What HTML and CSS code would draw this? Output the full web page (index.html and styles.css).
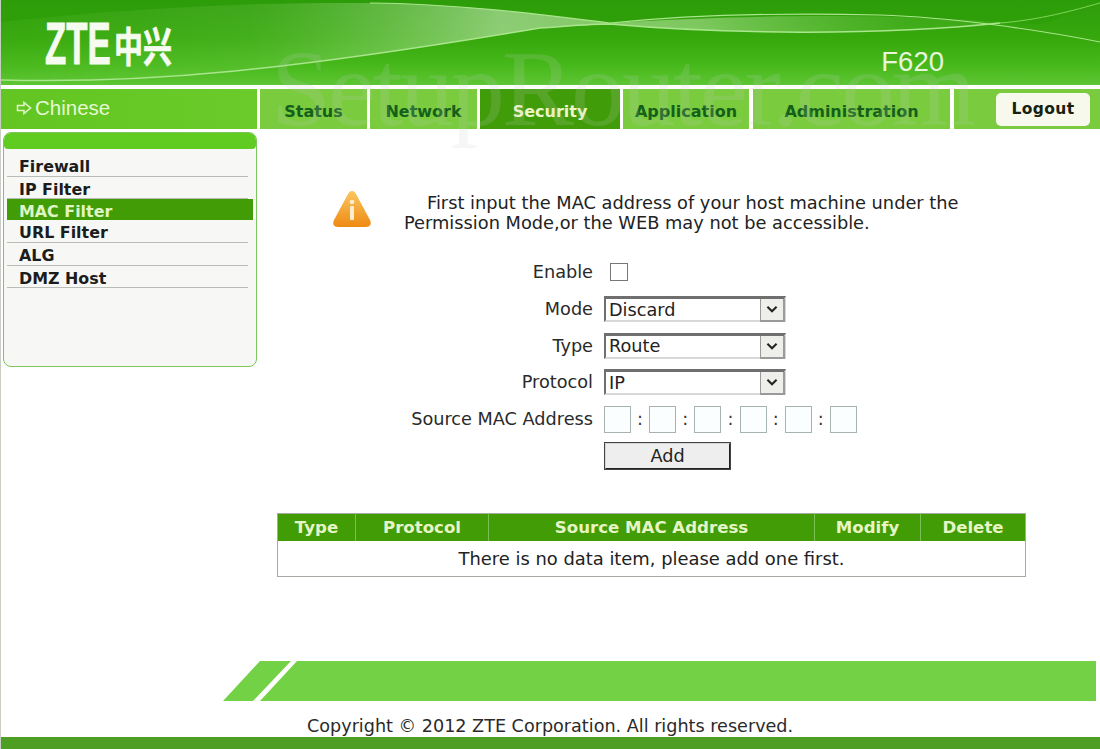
FILE: index.html
```html
<!DOCTYPE html>
<html lang="en">
<head>
<meta charset="utf-8">
<title>ZTE F620</title>
<link rel="stylesheet" href="styles.css">
</head>
<body>
<div class="page">
  <header class="header">
    <svg class="swoosh" viewBox="0 0 1100 85" preserveAspectRatio="none" aria-hidden="true">
      <defs>
        <linearGradient id="sheen" x1="0" x2="1" y1="0" y2="0">
          <stop offset="0" stop-color="#7fd45a" stop-opacity=".04"/>
          <stop offset=".25" stop-color="#8fd870" stop-opacity=".16"/>
          <stop offset=".5" stop-color="#cdeabf" stop-opacity=".58"/>
          <stop offset=".7" stop-color="#b9e5a2" stop-opacity=".55"/>
          <stop offset=".92" stop-color="#7fd45a" stop-opacity=".15"/>
        </linearGradient>
      </defs>
      <path d="M0 22C130 8 260 2 370 3C470 4 560 17 610 23C700 14 800 13 880 16C950 18 1000 22 1040 24C1060 18 1085 8 1100 3V0H0Z" fill="#2b9d08" opacity=".55"/>
      <path d="M0 80C150 84 290 70 540 28L610 24C720 34 880 36 1000 23C950 17 800 11 610 23C560 17 470 4 370 3C260 2 130 8 0 22Z" fill="url(#sheen)"/>
      <path d="M0 80C150 84 290 70 540 28C570 26 590 24 610 24C720 34 880 36 1000 23" fill="none" stroke="#a9e58c" stroke-width="1.5"/>
      <path d="M370 3C470 4 560 17 610 23C700 14 800 13 880 15C950 17 1040 30 1100 42" fill="none" stroke="#a9e58c" stroke-width="1.2"/>
      <path d="M1000 23C1040 20 1075 10 1100 3" fill="none" stroke="#7ed75a" stroke-width="1"/>
    </svg>
    <div class="logo"><span class="logo-latin">ZTE</span><span class="logo-cjk">中兴</span></div>
    <div class="model">F620</div>
  </header>

  <nav class="nav">
    <a class="lang"><svg class="lang-arrow" viewBox="0 0 16 14" aria-hidden="true"><path d="M1.5 4.5H8V1.5L14.5 7 8 12.5V9.5H1.5Z" fill="none" stroke="#dff6c4" stroke-width="1.6"/></svg>Chinese</a>
    <a class="tab tab-status">Status</a>
    <a class="tab tab-network">Network</a>
    <a class="tab tab-security">Security</a>
    <a class="tab tab-application">Application</a>
    <a class="tab tab-admin">Administration</a>
    <div class="tab-rest"><button class="logout" type="button">Logout</button></div>
  </nav>

  <div class="content">
    <aside class="sidebar">
      <div class="side-head"></div>
      <ul class="side-list">
        <li class="side-item">Firewall</li>
        <li class="side-item">IP Filter</li>
        <li class="side-item side-active">MAC Filter</li>
        <li class="side-item">URL Filter</li>
        <li class="side-item">ALG</li>
        <li class="side-item">DMZ Host</li>
      </ul>
    </aside>

    <main class="main">
      <section class="notice">
        <svg class="warn" viewBox="0 0 40 38" aria-hidden="true">
          <defs>
            <linearGradient id="warnfill" x1="0" x2="0" y1="0" y2="1">
              <stop offset="0" stop-color="#fbc660"/>
              <stop offset="1" stop-color="#ee8a14"/>
            </linearGradient>
          </defs>
          <path d="M20 1C22 1 23 2 24 4L38 30C40 34 38 37 34 37H6C2 37 0 34 2 30L16 4C17 2 18 1 20 1Z" fill="url(#warnfill)"/>
          <circle cx="20" cy="12" r="2.300" fill="#fdeecf"/>
          <rect x="18" y="16" width="4" height="14" rx="1" fill="#fdeecf"/>
        </svg>
        <p class="notice-text">First input the MAC address of your host machine under the Permission Mode,or the WEB may not be accessible.</p>
      </section>

      <form class="form">
        <label class="lbl">Enable</label>
        <div class="ctl"><input class="check" type="checkbox"></div>
        <label class="lbl">Mode</label>
        <div class="ctl select-wrap"><select class="select"><option>Discard</option></select><svg class="sel-arrow" viewBox="0 0 24 20" aria-hidden="true"><path d="M7 7L12 12L17 7" fill="none" stroke="#222" stroke-width="2.200"/></svg></div>
        <label class="lbl">Type</label>
        <div class="ctl select-wrap"><select class="select"><option>Route</option></select><svg class="sel-arrow" viewBox="0 0 24 20" aria-hidden="true"><path d="M7 7L12 12L17 7" fill="none" stroke="#222" stroke-width="2.200"/></svg></div>
        <label class="lbl">Protocol</label>
        <div class="ctl select-wrap"><select class="select"><option>IP</option></select><svg class="sel-arrow" viewBox="0 0 24 20" aria-hidden="true"><path d="M7 7L12 12L17 7" fill="none" stroke="#222" stroke-width="2.200"/></svg></div>
        <label class="lbl">Source MAC Address</label>
        <div class="ctl mac">
          <input class="octet" type="text"><span class="colon">:</span>
          <input class="octet" type="text"><span class="colon">:</span>
          <input class="octet" type="text"><span class="colon">:</span>
          <input class="octet" type="text"><span class="colon">:</span>
          <input class="octet" type="text"><span class="colon">:</span>
          <input class="octet" type="text">
        </div>
        <span class="lbl"></span>
        <div class="ctl"><button class="add" type="button">Add</button></div>
      </form>

      <table class="table">
        <thead>
          <tr>
            <th class="col-type">Type</th>
            <th class="col-proto">Protocol</th>
            <th class="col-src">Source MAC Address</th>
            <th class="col-mod">Modify</th>
            <th class="col-del">Delete</th>
          </tr>
        </thead>
        <tbody>
          <tr><td colspan="5">There is no data item, please add one first.</td></tr>
        </tbody>
      </table>
    </main>
  </div>

  <footer class="footer">
    <div class="band"></div>
    <div class="copyright">Copyright © 2012 ZTE Corporation. All rights reserved.</div>
    <div class="baseline"></div>
  </footer>

  <div class="watermark" aria-hidden="true">SetupRouter.com</div>
</div>
</body>
</html>
```
FILE: styles.css
```css
* { box-sizing: border-box; }
html, body { margin: 0; padding: 0; background: #fff; }
body { font-family: "DejaVu Sans", Verdana, sans-serif; color: #222; }
.page { position: relative; width: 1100px; height: 749px; overflow: hidden; background: #fff; border-left: 1px solid #c9cec5; }

.header {
  position: relative; height: 85px; display: flex; justify-content: space-between; align-items: flex-start;
  margin-left: -1px;
  background: linear-gradient(180deg, #2f9c0c 0%, #36a80c 45%, #48b91c 78%, #5ec534 100%);
}
.swoosh { position: absolute; inset: 0; width: 100%; height: 100%; }
.logo { position: relative; display: flex; align-items: center; margin: 22px 0 0 45px; color: #f6fbf0; height: 44px; }
.logo-latin { font: 700 60px/44px "Liberation Sans", sans-serif; transform: scaleX(.58); transform-origin: left center; width: 69px; -webkit-text-stroke: 1px #f6fbf0; }
.logo-cjk { font: 700 29px/44px "Noto Sans CJK SC", sans-serif; transform: scaleY(1.4); -webkit-text-stroke: .5px #f6fbf0; }
.model { position: relative; margin: 45px 156px 0 0; font: 400 27.5px/34px "Liberation Sans", sans-serif; color: #e6f5dc; }

.nav { display: flex; height: 40px; margin: 4px 0 0 -1px; gap: 3px; font-weight: 700; font-size: 16px; }
.lang {
  width: 257px; display: flex; align-items: center; padding: 0 0 3px 16px; background: linear-gradient(90deg, #62c521, #6acb2a);
  font: 400 20.5px/24px "Liberation Sans", sans-serif; color: #e6f9d3;
}
.lang-arrow { width: 16px; height: 14px; margin-right: 3px; }
.tab { display: flex; align-items: flex-end; justify-content: center; padding-bottom: 7px; color: #14601a; background: #7bcb3f; line-height: 20px; }
.tab-status { width: 107px; }
.tab-network { width: 107px; }
.tab-security { width: 140px; background: #419c0a; color: #eef6c8; }
.tab-application { width: 126px; }
.tab-admin { width: 197px; margin-left: 1px; }
.tab-rest { flex: 1; margin-left: 1px; background: #7bcb3f; display: flex; justify-content: flex-end; align-items: center; padding-right: 10px; }
.logout { width: 94px; height: 33px; border: 0; border-radius: 5px; background: #f6f9ec; color: #16220f; font: 700 15.5px "DejaVu Sans", sans-serif; letter-spacing: .4px; }

.content { display: flex; height: 532px; padding-top: 3px; }
.sidebar { width: 254px; height: 235px; margin-left: 2px; border: 1px solid #7fc65a; border-radius: 8px; background: #f7f8f6; overflow: hidden; flex: none; }
.side-head { height: 16px; background: #60cb20; border-radius: 0 0 4px 4px; }
.side-list { list-style: none; margin: 5px 0 0; padding: 0 3px; }
.side-item { height: 22.700px; padding: 2px 0 0 12px; margin-right: 5px; font: 700 15.900px/21px "DejaVu Sans", sans-serif; color: #1c1c1c; border-bottom: 1px solid #b9bdb7; }
.side-active { margin-right: 0; background: #429c05; color: #dff5c4; border-bottom: 0; height: 21px; }

.main { flex: 1; min-width: 0; }
.notice { display: flex; align-items: flex-start; height: 122px; padding: 58px 0 0 75px; }
.warn { width: 40px; height: 38px; flex: none; }
.notice-text { width: 575px; margin: 3px 0 0 32px; font-size: 17.8px; line-height: 20px; text-indent: 23px; color: #222; }

.form { display: grid; grid-template-columns: 336px 1fr; column-gap: 11px; row-gap: 0; grid-auto-rows: 36.7px; align-items: center; font-size: 17.7px; }
.lbl { text-align: right; color: #2a2a2a; font-size: 17.7px; }
.ctl { display: flex; align-items: center; }
.check { appearance: none; width: 18px; height: 18px; margin: 0 0 0 6px; border: 1px solid #777; background: #fff; }
.select-wrap { position: relative; width: 182px; }
.select { appearance: none; width: 182px; height: 26px; padding: 0 0 0 3px; border: 2px solid; border-top-width: 3px; border-color: #6f6f6f #d8d8d8 #d8d8d8 #6f6f6f; border-radius: 0; background: #fff; font: 17.7px "DejaVu Sans", sans-serif; color: #222; }
.sel-arrow { position: absolute; right: 1px; top: 50%; width: 25px; height: 23px; margin-top: -10px; background: #eeeeea; border: 1px solid #9a9a9a; border-width: 0 2px 2px 1px; }
.mac { gap: 0; }
.octet { width: 27px; height: 27px; padding: 0; border: 1px solid #a7b2b2; background: #fbfefe; }
.colon { width: 18.200px; text-align: center; font-size: 17.7px; color: #333; }
.add { width: 127px; height: 28px; padding: 0; border: 2px solid; border-color: #d5d5d5 #222 #222 #d5d5d5; background: #eee; color: #222; font: 17.7px "DejaVu Sans", sans-serif; outline: 1px solid #444; outline-offset: -1px; }

.table { width: 749px; margin: 39px 0 0 20px; border-collapse: collapse; table-layout: fixed; border: 1px solid #a6aaa3; }
.table th { height: 27px; padding: 0; background: #429c05; color: #e6f5c6; font-size: 16.6px; font-weight: 700; border-right: 1px solid #7cbf56; }
.table th:last-child { border-right: 0; }
.table td { height: 36px; padding: 0; text-align: center; font-size: 17.9px; color: #222; background: #fff; }
.col-type { width: 78px; }
.col-proto { width: 133px; }
.col-src { width: 326px; }
.col-mod { width: 106px; }

.footer { display: flex; flex-direction: column; }
.band { height: 40px; margin: 0 4px 0 221px; background: #73d145; clip-path: polygon(1px 100%, 38px 0, 69px 0, 31px 100%, 38px 100%, 75px 0, 100% 0, 100% 100%); }
.copyright { height: 36px; padding: 14px 0 0 306px; font-size: 17.6px; line-height: 22px; color: #2a2a2a; white-space: nowrap; }
.baseline { height: 12px; background: #4f9e24; }

.watermark { position: absolute; left: 270px; top: 29px; font: 400 108px/120px "Liberation Serif", serif; color: rgba(190,205,190,.17); letter-spacing: -3px; white-space: nowrap; pointer-events: none; }
```
